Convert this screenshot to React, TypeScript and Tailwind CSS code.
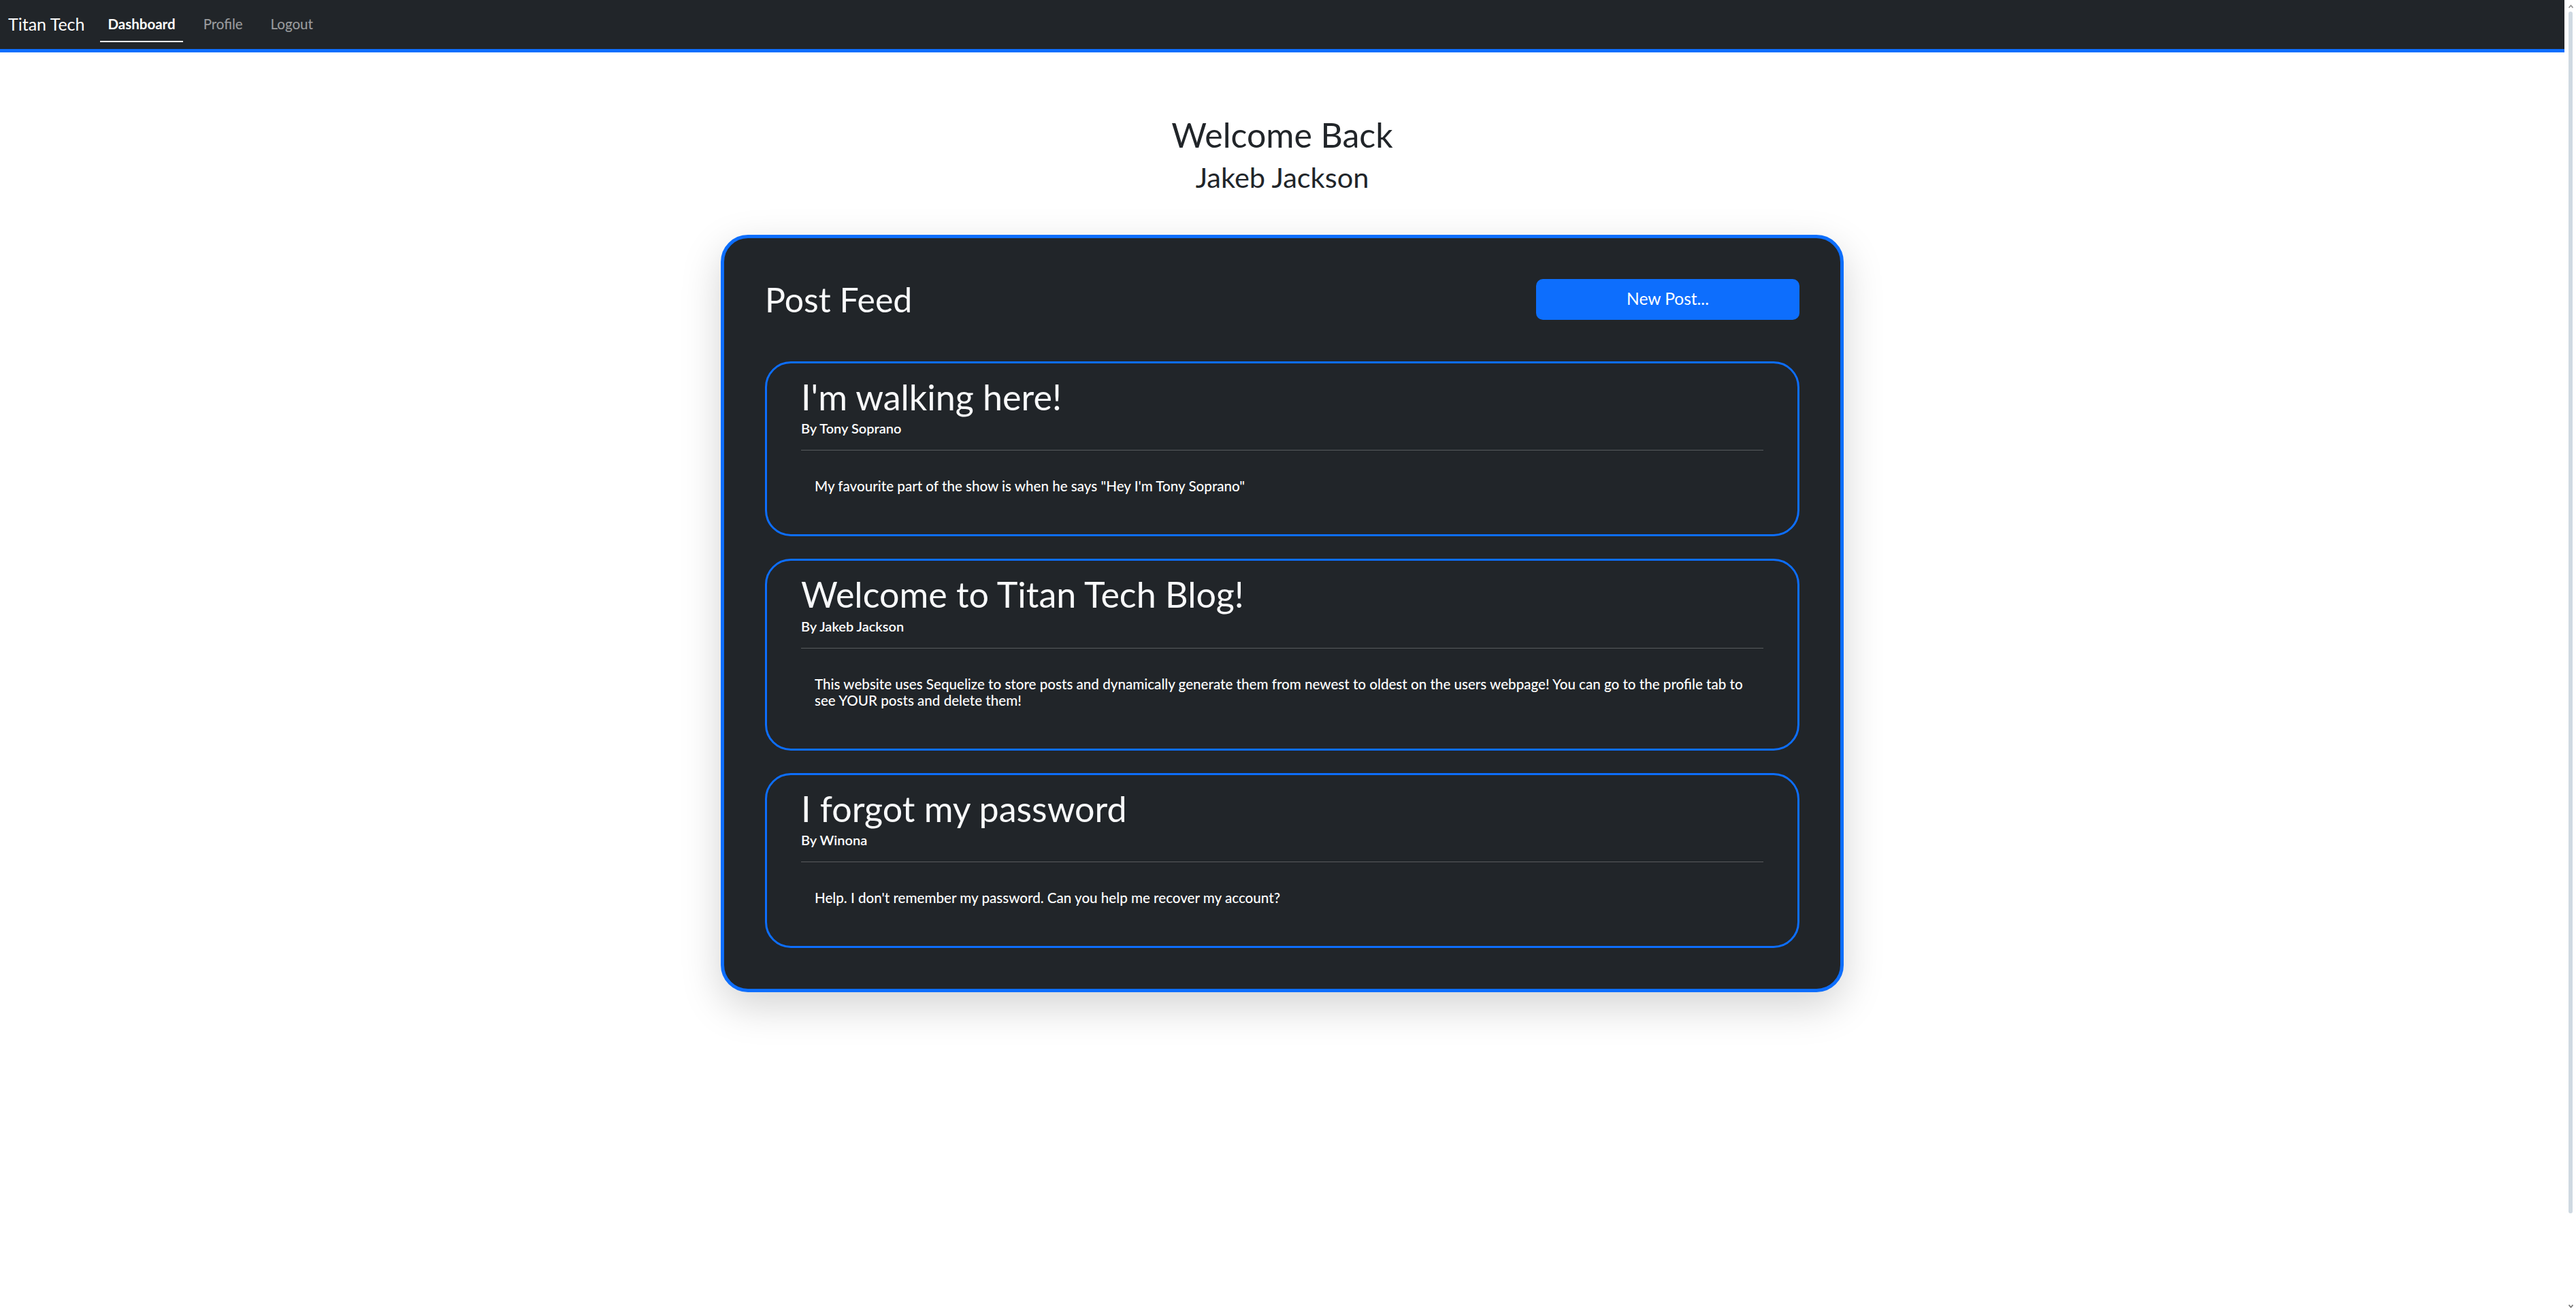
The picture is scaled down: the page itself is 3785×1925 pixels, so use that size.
import React from 'react';

const posts = [
  {
    title: "I'm walking here!",
    author: 'Tony Soprano',
    body: 'My favourite part of the show is when he says "Hey I\'m Tony Soprano"',
  },
  {
    title: 'Welcome to Titan Tech Blog!',
    author: 'Jakeb Jackson',
    body: 'This website uses Sequelize to store posts and dynamically generate them from newest to oldest on the users webpage! You can go to the profile tab to see YOUR posts and delete them!',
  },
  {
    title: 'I forgot my password',
    author: 'Winona',
    body: "Help. I don't remember my password. Can you help me recover my account?",
  },
];

const NavLink = ({ label, active }: { label: string; active?: boolean }) => (
  <a
    href="#"
    className={
      active
        ? 'h-[52px] px-[11px] flex items-center border-b-2 border-white text-white font-bold text-[20.5px]'
        : 'h-[52px] px-[11px] flex items-center border-b-2 border-transparent text-white/55 text-[20.5px]'
    }
  >
    {label}
  </a>
);

const PostCard = ({ title, author, body }: { title: string; author: string; body: string }) => (
  <div className="border-[3px] border-[#0d6efd] rounded-[38px] px-[50px] pt-[18px] pb-[59px]">
    <h2 className="text-[52px] leading-[1.2] text-[#f8f9fa]">{title}</h2>
    <p className="text-[20px] leading-[1.5] font-semibold text-white">By {author}</p>
    <hr className="mt-[17px] border-t border-white/25" />
    <p className="mt-[40px] px-[20px] text-[20.6px] leading-[24px] font-medium text-white">{body}</p>
  </div>
);

export default function App() {
  return (
    <div className="flex h-screen overflow-hidden bg-white font-['Lato',sans-serif]">
      <div className="flex-1 min-w-0">
        <nav className="h-[77px] bg-[#212529] border-b-[5px] border-[#0d6efd] flex items-center pl-[12px]">
          <a href="#" className="text-white text-[25px] mr-[23px]">Titan Tech</a>
          <div className="flex items-center gap-[19px]">
            <NavLink label="Dashboard" active />
            <NavLink label="Profile" />
            <NavLink label="Logout" />
          </div>
        </nav>

        <header className="pt-[91px] text-center text-[#212529]">
          <h1 className="text-[50px] leading-[1.2]">Welcome Back</h1>
          <h2 className="mt-[8px] text-[41.5px] leading-[1.2]">Jakeb Jackson</h2>
        </header>

        <section className="mt-[59px] mx-auto w-[1650px] bg-[#212529] border-[5px] border-[#0d6efd] rounded-[40px] p-[60px] shadow-[0_20px_60px_rgba(0,0,0,0.175)]">
          <div className="flex items-center justify-between mb-[61px]">
            <h1 className="text-[50px] leading-[1.2] text-[#f8f9fa]">Post Feed</h1>
            <button className="w-[387px] h-[60px] rounded-[10px] bg-[#0d6efd] text-white text-[24.5px]">
              New Post...
            </button>
          </div>
          <div className="flex flex-col gap-[33px]">
            {posts.map((post, idx) => (
              <PostCard key={idx} {...post} />
            ))}
          </div>
        </section>
      </div>

      {/* scrollbar */}
      <div className="w-[17px] flex flex-col items-center pl-[1px] pt-[7px] pb-[3px] bg-white">
        <svg width="7" height="5" viewBox="0 0 7 5">
          <polyline points="0.5,4.5 3.5,1 6.5,4.5" fill="none" stroke="#8f8f8f" strokeWidth="1.6" />
        </svg>
        <div className="mt-[5px] w-[6px] h-[1766px] rounded-full bg-[#cfd9e2]" />
        <div className="flex-1" />
        <svg width="7" height="5" viewBox="0 0 7 5">
          <polyline points="0.5,0.5 3.5,4 6.5,0.5" fill="none" stroke="#6f6f6f" strokeWidth="1.6" />
        </svg>
      </div>
    </div>
  );
}
